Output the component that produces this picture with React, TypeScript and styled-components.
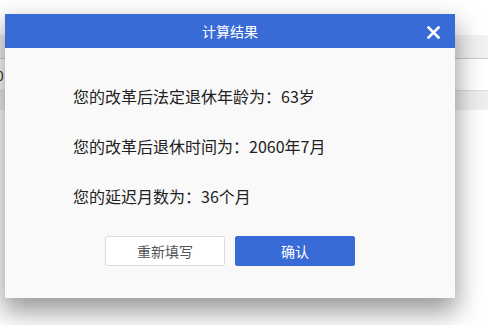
import React from "react";
import styled, { createGlobalStyle } from "styled-components";

const Global = createGlobalStyle`
  html, body { margin: 0; padding: 0; background: #ffffff; }
  body {
    width: 489px; height: 325px; overflow: hidden; position: relative;
    font-family: "Noto Sans CJK SC", "Noto Sans", sans-serif;
  }
`;

const Page = styled.div`
  padding-top: 35px;
  width: 489px;
  height: 325px;
  box-sizing: border-box;
`;

const Table = styled.div`
  width: 492px;
  margin-left: -4px;
  display: flex;
  flex-direction: column;
`;

const TRow = styled.div<{ $bg: string; $h: number; $border?: string }>`
  height: ${(p) => p.$h}px;
  background: ${(p) => p.$bg};
  border-bottom: ${(p) => (p.$border ? `1px solid ${p.$border}` : "none")};
  border-top-right-radius: 3px;
  display: flex;
  align-items: center;
  font-size: 14px;
  color: #333;
`;

const Overlay = styled.div`
  position: absolute;
  left: 5px;
  top: 14px;
  width: 450px;
  background: #f9f9f9;
  box-shadow: 0 12px 24px 2px rgba(0, 0, 0, 0.4);
  display: flex;
  flex-direction: column;
`;

const Header = styled.div`
  height: 34px;
  background: #396bd7;
  display: flex;
  align-items: center;
  justify-content: center;
  position: relative;
  color: #ffffff;
  font-size: 14px;
`;

const Close = styled.button`
  position: absolute;
  right: 14px;
  top: 10px;
  width: 16px;
  height: 16px;
  padding: 0;
  border: 0;
  background: transparent;
  display: flex;
  align-items: center;
  justify-content: center;
  cursor: pointer;
`;

const Body = styled.div`
  padding: 36px 20px 28px 68px;
  display: flex;
  flex-direction: column;
  gap: 26px;
`;

const Line = styled.div`
  font-size: 16px;
  line-height: 24px;
  color: #222;
  white-space: nowrap;
`;

const Actions = styled.div`
  display: flex;
  justify-content: center;
  gap: 10px;
  padding: 0 0 32px;
`;

const Btn = styled.button<{ $primary?: boolean }>`
  width: 120px;
  height: 30px;
  box-sizing: border-box;
  border-radius: 2px;
  font-family: inherit;
  font-size: 14px;
  cursor: pointer;
  border: 1px solid ${(p) => (p.$primary ? "#396bd7" : "#dcdcdc")};
  background: ${(p) => (p.$primary ? "#396bd7" : "#ffffff")};
  color: ${(p) => (p.$primary ? "#ffffff" : "#555")};
`;

export default function App() {
  return (
    <>
      <Global />
      <Page>
        <Table>
          <TRow $bg="#f2f2f2" $h={23} $border="#cccccc" />
          <TRow $bg="#ffffff" $h={31} $border="#dddddd">0</TRow>
          <TRow $bg="#eeeeee" $h={19} />
        </Table>
      </Page>
      <Overlay>
        <Header>
          计算结果
          <Close aria-label="关闭">
            <svg width="13" height="13" viewBox="0 0 13 13">
              <path d="M1.5 1.5 L11.5 11.5 M11.5 1.5 L1.5 11.5" stroke="#fff" strokeWidth="2.6" strokeLinecap="square" />
            </svg>
          </Close>
        </Header>
        <Body>
          <Line>您的改革后法定退休年龄为：63岁</Line>
          <Line>您的改革后退休时间为：2060年7月</Line>
          <Line>您的延迟月数为：36个月</Line>
        </Body>
        <Actions>
          <Btn>重新填写</Btn>
          <Btn $primary>确认</Btn>
        </Actions>
      </Overlay>
    </>
  );
}
